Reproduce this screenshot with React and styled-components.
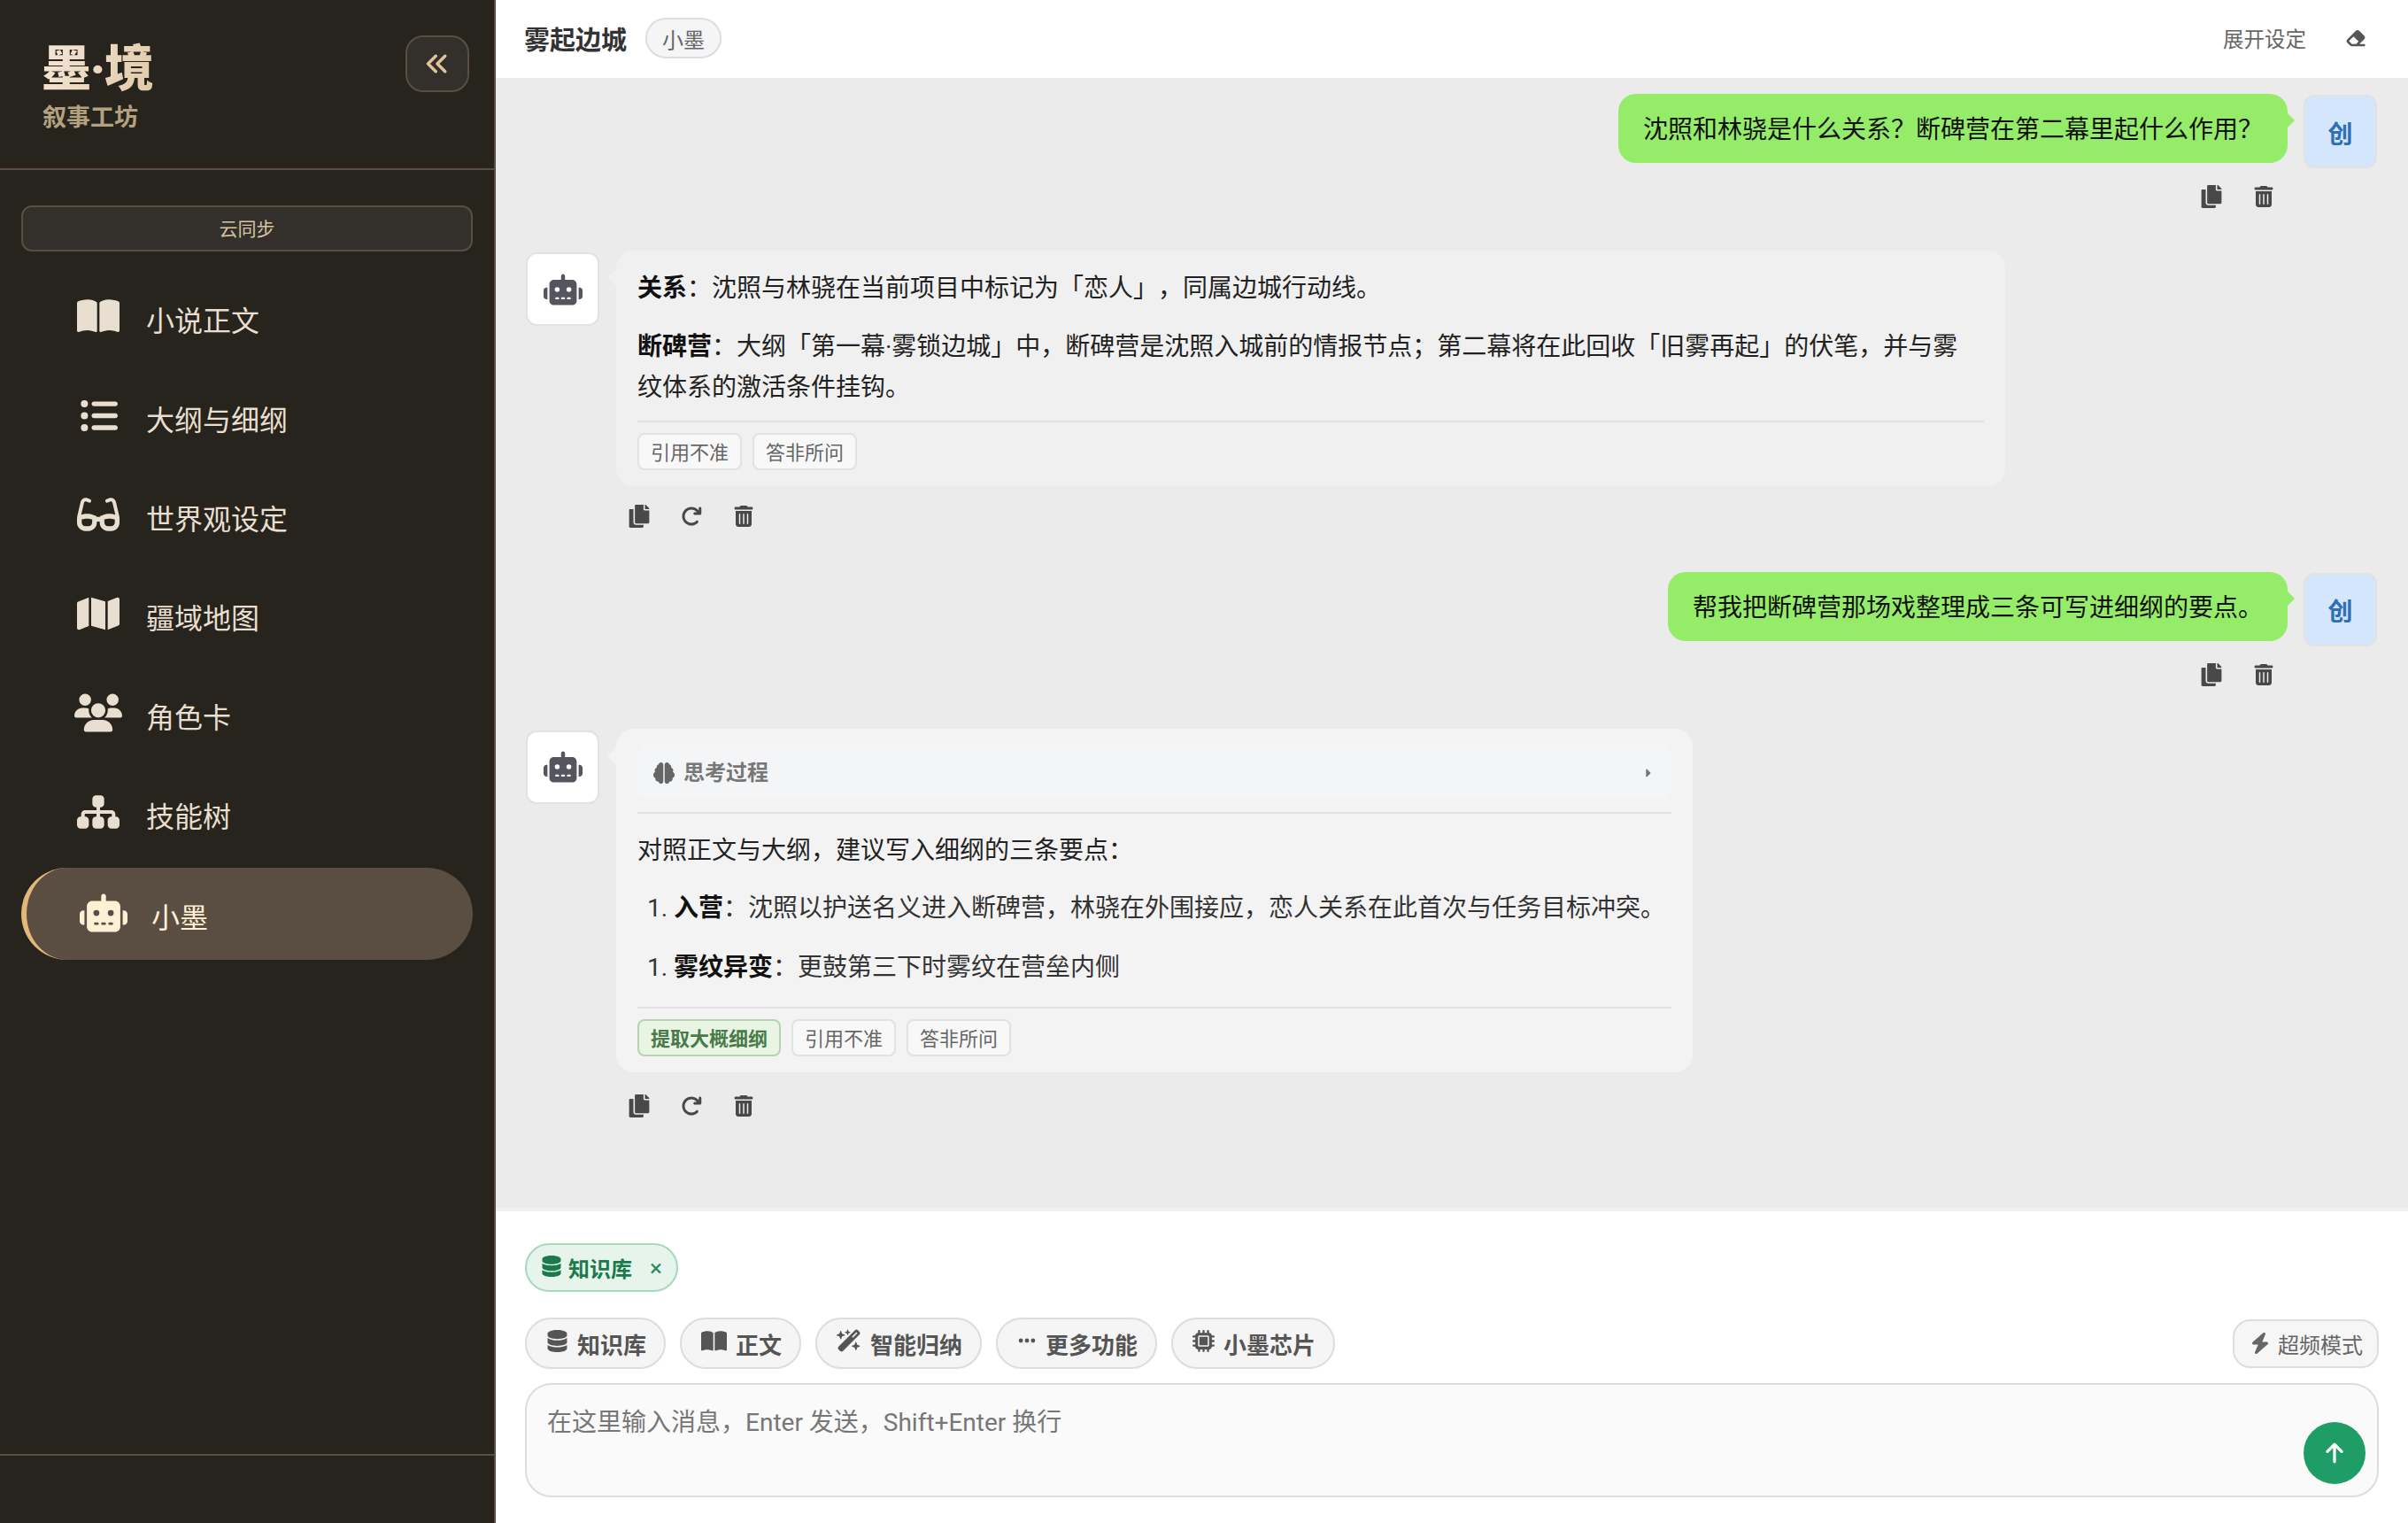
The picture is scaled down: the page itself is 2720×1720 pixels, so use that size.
import React from "react";
import styled, { createGlobalStyle } from "styled-components";
import { FaCopy } from "react-icons/fa";
import {
  FaAnglesLeft,
  FaArrowRotateRight,
  FaArrowUp,
  FaBolt,
  FaBookOpen,
  FaBrain,
  FaCaretRight,
  FaDatabase,
  FaEllipsis,
  FaEraser,
  FaGlasses,
  FaListUl,
  FaMap,
  FaMicrochip,
  FaRobot,
  FaSitemap,
  FaTrashCan,
  FaUsers,
  FaWandMagicSparkles,
} from "react-icons/fa6";

const GlobalStyle = createGlobalStyle`
  * { box-sizing: border-box; }
  html, body, #root { height: 100%; margin: 0; }
  body {
    font-family: Roboto, "Noto Sans CJK SC", sans-serif;
    color: #222;
    text-spacing-trim: space-all;
  }
`;

const AppShell = styled.div`
  display: flex;
  height: 100vh;
  overflow: hidden;
`;

/* sidebar */
const Sidebar = styled.aside`
  display: flex;
  flex-direction: column;
  flex: 0 0 560px;
  background: #27231d;
  border-right: 2px solid #5a4e42;
`;

const BrandBar = styled.div`
  display: flex;
  justify-content: space-between;
  align-items: flex-start;
  height: 192px;
  padding: 40px 28px 0 48px;
  border-bottom: 2px solid #5a4e42;
`;

const Brand = styled.div`
  padding-top: 6px;
`;

const BrandTitle = styled.div`
  margin-left: -1px;
  font-size: 56px;
  line-height: 64px;
  font-weight: 900;
  letter-spacing: -1.5px;
  background: linear-gradient(120deg, #f5e8d8, #e0c8a6);
  -webkit-background-clip: text;
  background-clip: text;
  color: transparent;
`;

const BrandSub = styled.div`
  margin-top: 6px;
  font-size: 27px;
  line-height: 34px;
  font-weight: 700;
  color: #b3a27f;
`;

const CollapseBtn = styled.button`
  display: flex;
  align-items: center;
  justify-content: center;
  width: 72px;
  height: 64px;
  padding: 0;
  background: #33302b;
  border: 2px solid #5a4e42;
  border-radius: 20px;
  color: #e0c49a;
  font-size: 28px;
`;

const SyncBtn = styled.button`
  display: block;
  height: 52px;
  margin: 40px 24px 24px;
  padding: 0 0 2px;
  background: #33302c;
  border: 2px solid #5a4e42;
  border-radius: 12px;
  color: #d6c3a2;
  font-family: inherit;
  font-size: 21px;
`;

const Nav = styled.nav`
  display: flex;
  flex-direction: column;
  gap: 8px;
  padding: 0 24px;
`;

const NavItem = styled.a`
  display: flex;
  align-items: center;
  height: 104px;
  padding: ${(p) => (p.$active ? "3px" : "0")} 0 0 60px;
  border-radius: 52px;
  border-left: ${(p) => (p.$active ? "6px solid #e3b878" : "0 solid transparent")};
  background: ${(p) => (p.$active ? "#5a4d41" : "transparent")};
  color: ${(p) => (p.$active ? "#fdf0d5" : "#e8dfd0")};
  font-size: 32px;
`;

const NavIcon = styled.span`
  display: flex;
  justify-content: center;
  flex: 0 0 54px;
  margin-top: -6px;
  margin-right: 27px;
`;

const SideFooter = styled.div`
  height: 78px;
  margin-top: auto;
  border-top: 2px solid #5a4e42;
`;

/* main */
const Main = styled.main`
  display: flex;
  flex-direction: column;
  flex: 1;
  min-width: 0;
`;

const ChatHeader = styled.header`
  display: flex;
  align-items: center;
  flex: 0 0 88px;
  padding: 0 47px 2px 32px;
  background: #fff;
`;

const ChatTitle = styled.h1`
  margin: 0 21px 0 0;
  font-size: 29px;
  font-weight: 700;
  color: #333;
`;

const RoleChip = styled.span`
  display: flex;
  align-items: center;
  justify-content: center;
  width: 86px;
  height: 46px;
  background: #f5f5f5;
  border: 2px solid #ddd;
  border-radius: 23px;
  color: #666;
  font-size: 24px;
`;

const SettingsLink = styled.span`
  margin-left: auto;
  margin-right: 44px;
  color: #666;
  font-size: 23.5px;
`;

const EraserIcon = styled.span`
  display: flex;
  color: #555;
`;

const Messages = styled.section`
  flex: 1;
  min-height: 0;
  padding: 17px 35px 0 34px;
  background: #ebebeb;
  overflow: hidden;
`;

const Message = styled.div`
  margin-bottom: ${(p) => (p.$user ? "49px" : "50px")};
`;

const Row = styled.div`
  display: flex;
  align-items: flex-start;
  justify-content: ${(p) => (p.$user ? "flex-end" : "flex-start")};
  gap: ${(p) => (p.$user ? "18px" : "19px")};
`;

const Avatar = styled.div`
  display: flex;
  align-items: center;
  justify-content: center;
  flex: 0 0 83px;
  height: 83px;
  margin-top: 2px;
  padding-top: ${(p) => (p.$user ? "2px" : "0")};
  background: ${(p) => (p.$user ? "#d3e6fc" : "#fff")};
  border: 2px solid #e2e2e2;
  border-radius: 12px;
  color: ${(p) => (p.$user ? "#2f6fb5" : "#555560")};
  font-size: 28px;
  font-weight: 700;
`;

const UserBubble = styled.div`
  position: relative;
  margin-top: 1px;
  padding: 18px 28px 14px;
  background: #95ec69;
  border-radius: 20px;
  color: #111;
  font-size: 28px;
  line-height: 46px;

  &::after {
    content: "";
    position: absolute;
    top: 22px;
    right: -8px;
    border-left: 8px solid #95ec69;
    border-top: 8px solid transparent;
    border-bottom: 8px solid transparent;
  }
`;

const BotBubble = styled.div`
  position: relative;
  width: fit-content;
  max-width: 1569px;
  margin-bottom: ${(p) => (p.$thinking ? "4px" : "0")};
  padding: ${(p) => (p.$thinking ? "16px" : "20px")} 24px 18px;
  background: ${(p) => (p.$thinking ? "#f3f3f3" : "#f0f0f0")};
  border-radius: 20px;
  font-size: 28px;
  line-height: 46.5px;
  color: #222;

  &::before {
    content: "";
    position: absolute;
    top: 22px;
    left: -10px;
    border-right: 10px solid ${(p) => (p.$thinking ? "#f3f3f3" : "#f0f0f0")};
    border-top: 9px solid transparent;
    border-bottom: 9px solid transparent;
  }

  p {
    margin: 0 0 19px;
    padding-right: 10px;
  }

  p:nth-last-child(2) {
    margin-bottom: 0;
  }

  strong {
    color: #111;
    font-weight: 700;
  }
`;

const Thinking = styled.div`
  margin-bottom: 19px;
  padding-bottom: 15px;
  border-bottom: 2px solid #e2e2e2;
`;

const ThinkingHead = styled.div`
  display: flex;
  align-items: center;
  height: 63px;
  padding: 6px 20px 0 18px;
  background: #f4f5f7;
  border-radius: 12px;
  color: #777;
  font-size: 24px;
  font-weight: 700;

  svg:first-child {
    margin-right: 10px;
    color: #666;
  }

  svg:last-child {
    margin-left: auto;
    font-size: 14px;
  }
`;

const Steps = styled.ol`
  margin: 0 0 20px;
  padding: 0 7px 0 41px;
  color: #333;

  &:last-of-type {
    margin-bottom: 21px;
  }
`;

const Feedback = styled.div`
  display: flex;
  gap: 12px;
  margin-top: 13px;
  padding-top: 12px;
  border-top: 2px solid #e2e2e2;
`;

const FeedbackBtn = styled.button`
  height: 42px;
  padding: 0 13px 2px;
  background: ${(p) => (p.$primary ? "#e8f5e3" : "#f8f8f8")};
  border: 2px solid ${(p) => (p.$primary ? "#b6d2b0" : "#e2e2e2")};
  border-radius: 8px;
  color: ${(p) => (p.$primary ? "#4a7a4a" : "#666")};
  font-family: inherit;
  font-size: 22px;
  font-weight: ${(p) => (p.$primary ? 700 : 400)};
`;

const Actions = styled.div`
  display: flex;
  justify-content: ${(p) => (p.$user ? "flex-end" : "flex-start")};
  gap: 19px;
  margin-top: ${(p) => (p.$user ? "20px" : "22px")};
  padding: ${(p) => (p.$user ? "0 108px 0 0" : "0 0 0 108px")};
`;

const ActionBtn = styled.span`
  display: flex;
  align-items: center;
  justify-content: center;
  width: 40px;
  height: 24px;
  color: #484848;
  font-size: ${(p) => (p.$large ? "26px" : "24px")};
`;

/* composer */
const Composer = styled.footer`
  flex: 0 0 auto;
  padding: 36px 33px 29px;
  background: #fff;
  border-top: 4px solid #f0f0f0;
`;

const ActiveChip = styled.span`
  display: inline-flex;
  align-items: center;
  height: 55px;
  padding: 0 16px;
  background: #e6f4ec;
  border: 2px solid #a6d9bd;
  border-radius: 28px;
  color: #1a7a4c;
  font-size: 24px;
  font-weight: 700;
  vertical-align: top;

  svg {
    margin-right: 7px;
    margin-bottom: 4px;
  }
`;

const ChipClose = styled.span`
  margin-left: 20px;
  color: #2a8a5e;
  font-size: 26px;
  font-weight: 400;
`;

const Tools = styled.div`
  display: flex;
  align-items: center;
  gap: 16px;
  margin: 29px 0 16px;
`;

const ToolBtn = styled.button`
  display: flex;
  align-items: center;
  gap: 10px;
  height: 58px;
  padding: 0 20px 0 22px;
  background: #f5f5f5;
  border: 2px solid #ddd;
  border-radius: 29px;
  color: #555;
  font-family: inherit;
  font-size: 26px;
  font-weight: 700;

  svg {
    margin-bottom: 6px;
  }
`;

const BoostBtn = styled.button`
  display: flex;
  align-items: center;
  gap: 8px;
  height: 55px;
  margin-left: auto;
  padding: 0 16px 0 17px;
  background: #f6f6f6;
  border: 2px solid #ddd;
  border-radius: 20px;
  color: #666;
  font-family: inherit;
  font-size: 24px;
`;

const InputBox = styled.div`
  position: relative;
  height: 129px;
`;

const Input = styled.textarea`
  display: block;
  width: 100%;
  height: 100%;
  padding: 20px 23px;
  background: #fafafa;
  border: 2px solid #ddd;
  border-radius: 30px;
  font-family: inherit;
  font-size: 28px;
  line-height: 46px;
  resize: none;
  outline: none;

  &::placeholder {
    color: #777;
    opacity: 1;
  }
`;

const SendBtn = styled.button`
  position: absolute;
  right: 15px;
  bottom: 15px;
  display: flex;
  align-items: center;
  justify-content: center;
  width: 70px;
  height: 70px;
  padding: 0;
  background: #1f9d66;
  border: 0;
  border-radius: 50%;
  color: #fff;
  font-size: 26px;
`;

// size is the width the icon should get: react-icons draws into a 1em square
const navItems = [
  { label: "小说正文", icon: FaBookOpen, size: 48 },
  { label: "大纲与细纲", icon: FaListUl, size: 43 },
  { label: "世界观设定", icon: FaGlasses, size: 48 },
  { label: "疆域地图", icon: FaMap, size: 48 },
  { label: "角色卡", icon: FaUsers, size: 54 },
  { label: "技能树", icon: FaSitemap, size: 48 },
  { label: "小墨", icon: FaRobot, size: 54, active: true },
];

const tools = [
  { label: "知识库", icon: FaDatabase, size: 25 },
  { label: "正文", icon: FaBookOpen, size: 29 },
  { label: "智能归纳", icon: FaWandMagicSparkles, size: 28 },
  { label: "更多功能", icon: FaEllipsis, size: 22 },
  { label: "小墨芯片", icon: FaMicrochip, size: 25 },
];

function MessageActions({ user }) {
  return (
    <Actions $user={user}>
      <ActionBtn $large><FaCopy /></ActionBtn>
      {!user && <ActionBtn><FaArrowRotateRight /></ActionBtn>}
      <ActionBtn><FaTrashCan /></ActionBtn>
    </Actions>
  );
}

function UserMessage({ children }) {
  return (
    <Message $user>
      <Row $user>
        <UserBubble>{children}</UserBubble>
        <Avatar $user>创</Avatar>
      </Row>
      <MessageActions user />
    </Message>
  );
}

function BotMessage({ thinking, children }) {
  return (
    <Message>
      <Row>
        <Avatar><FaRobot size={44} /></Avatar>
        <BotBubble $thinking={thinking}>{children}</BotBubble>
      </Row>
      <MessageActions />
    </Message>
  );
}

export default function App() {
  return (
    <AppShell>
      <GlobalStyle />
      <Sidebar>
        <BrandBar>
          <Brand>
            <BrandTitle>墨·境</BrandTitle>
            <BrandSub>叙事工坊</BrandSub>
          </Brand>
          <CollapseBtn><FaAnglesLeft /></CollapseBtn>
        </BrandBar>
        <SyncBtn>云同步</SyncBtn>
        <Nav>
          {navItems.map((item) => (
            <NavItem key={item.label} $active={item.active}>
              <NavIcon><item.icon size={item.size} /></NavIcon>
              {item.label}
            </NavItem>
          ))}
        </Nav>
        <SideFooter />
      </Sidebar>
      <Main>
        <ChatHeader>
          <ChatTitle>雾起边城</ChatTitle>
          <RoleChip>小墨</RoleChip>
          <SettingsLink>展开设定</SettingsLink>
          <EraserIcon><FaEraser size={24} /></EraserIcon>
        </ChatHeader>
        <Messages>
          <UserMessage>沈照和林骁是什么关系？断碑营在第二幕里起什么作用？</UserMessage>
          <BotMessage>
            <p><strong>关系</strong>：沈照与林骁在当前项目中标记为「恋人」，同属边城行动线。</p>
            <p><strong>断碑营</strong>：大纲「第一幕·雾锁边城」中，断碑营是沈照入城前的情报节点；第二幕将在此回收「旧雾再起」的伏笔，并与雾纹体系的激活条件挂钩。</p>
            <Feedback>
              <FeedbackBtn>引用不准</FeedbackBtn>
              <FeedbackBtn>答非所问</FeedbackBtn>
            </Feedback>
          </BotMessage>
          <UserMessage>帮我把断碑营那场戏整理成三条可写进细纲的要点。</UserMessage>
          <BotMessage thinking>
            <Thinking>
              <ThinkingHead>
                <FaBrain size={24} />
                思考过程
                <FaCaretRight />
              </ThinkingHead>
            </Thinking>
            <p>对照正文与大纲，建议写入细纲的三条要点：</p>
            <Steps>
              <li><strong>入营</strong>：沈照以护送名义进入断碑营，林骁在外围接应，恋人关系在此首次与任务目标冲突。</li>
            </Steps>
            <Steps>
              <li><strong>雾纹异变</strong>：更鼓第三下时雾纹在营垒内侧</li>
            </Steps>
            <Feedback>
              <FeedbackBtn $primary>提取大概细纲</FeedbackBtn>
              <FeedbackBtn>引用不准</FeedbackBtn>
              <FeedbackBtn>答非所问</FeedbackBtn>
            </Feedback>
          </BotMessage>
        </Messages>
        <Composer>
          <ActiveChip>
            <FaDatabase />
            知识库
            <ChipClose>×</ChipClose>
          </ActiveChip>
          <Tools>
            {tools.map((tool) => (
              <ToolBtn key={tool.label}>
                <tool.icon size={tool.size} />
                {tool.label}
              </ToolBtn>
            ))}
            <BoostBtn><FaBolt />超频模式</BoostBtn>
          </Tools>
          <InputBox>
            <Input placeholder="在这里输入消息，Enter 发送，Shift+Enter 换行" />
            <SendBtn><FaArrowUp /></SendBtn>
          </InputBox>
        </Composer>
      </Main>
    </AppShell>
  );
}
